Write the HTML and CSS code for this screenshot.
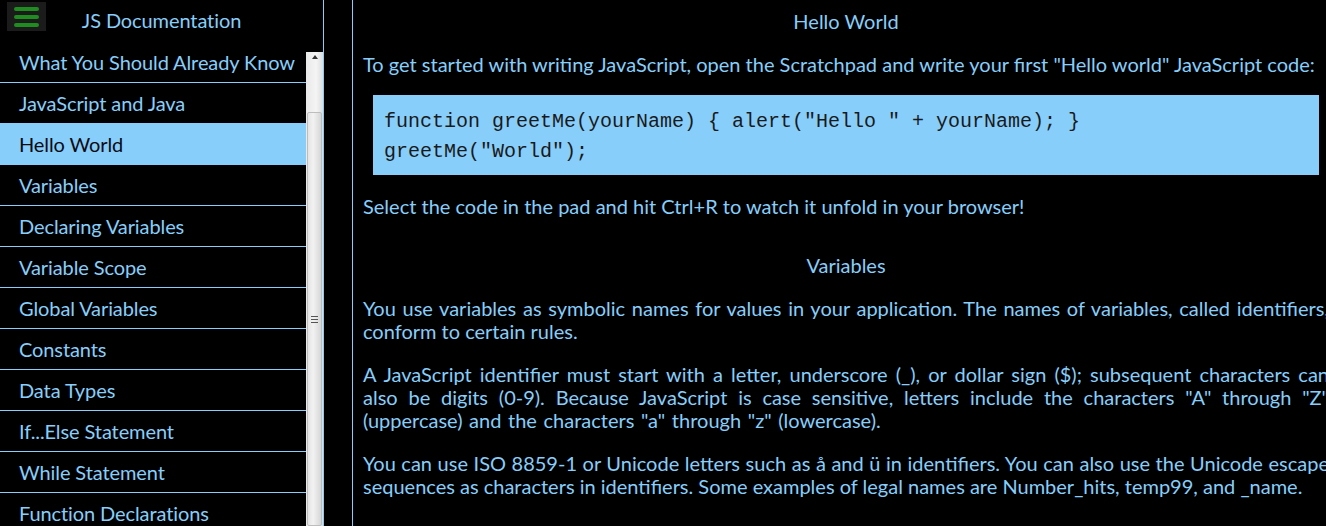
FILE: index.html
```html
<!DOCTYPE html>
<html lang="en">
<head>
<meta charset="utf-8">
<title>JS Documentation</title>
<link rel="stylesheet" href="styles.css">
</head>
<body>
<div class="app">
  <aside class="sidebar">
    <header class="side-head">
      <button class="menu-btn" aria-label="Menu"><span></span><span></span><span></span></button>
      <div class="title">JS Documentation</div>
    </header>
    <div class="nav-wrap">
      <nav class="nav">
        <ul class="nav-list">
          <li class="nav-item">What You Should Already Know</li>
          <li class="nav-item">JavaScript and Java</li>
          <li class="nav-item active">Hello World</li>
          <li class="nav-item">Variables</li>
          <li class="nav-item">Declaring Variables</li>
          <li class="nav-item">Variable Scope</li>
          <li class="nav-item">Global Variables</li>
          <li class="nav-item">Constants</li>
          <li class="nav-item">Data Types</li>
          <li class="nav-item">If...Else Statement</li>
          <li class="nav-item">While Statement</li>
          <li class="nav-item">Function Declarations</li>
          <li class="nav-item">Reference</li>
        </ul>
      </nav>
      <div class="scrollbar">
        <div class="sb-up"><span class="sb-arrow"></span></div>
        <div class="sb-track">
          <div class="sb-thumb"><span class="grip"></span></div>
        </div>
      </div>
    </div>
  </aside>
  <main class="content">
    <section class="section">
      <h2 class="heading">Hello World</h2>
      <p class="para">To get started with writing JavaScript, open the Scratchpad and write your first "Hello world" JavaScript code:</p>
      <pre class="code">function greetMe(yourName) { alert("Hello " + yourName); }
greetMe("World");</pre>
      <p class="para">Select the code in the pad and hit Ctrl+R to watch it unfold in your browser!</p>
    </section>
    <section class="section second">
      <h2 class="heading">Variables</h2>
      <p class="para">You use variables as symbolic names for values in your application. The names of variables, called identifiers, conform to certain rules.</p>
      <p class="para spaced">A JavaScript identifier must start with a letter, underscore (_), or dollar sign ($); subsequent characters can also be digits (0-9). Because JavaScript is case sensitive, letters include the characters "A" through "Z" (uppercase) and the characters "a" through "z" (lowercase).</p>
      <p class="para">You can use ISO 8859-1 or Unicode letters such as å and ü in identifiers. You can also use the Unicode escape sequences as characters in identifiers. Some examples of legal names are Number_hits, temp99, and _name.</p>
    </section>
  </main>
</div>
</body>
</html>
```

FILE: styles.css
```css
* { box-sizing: border-box; }
html, body {
  margin: 0;
  padding: 0;
  background: #000;
  height: 100%;
  overflow: hidden;
}
body {
  font-family: Lato, "Noto Sans", sans-serif;
  color: #87cefa;
}
.app {
  display: flex;
  height: 526px;
  width: 1326px;
  overflow: hidden;
}
.sidebar {
  flex: 0 0 324px;
  width: 324px;
  border-right: 1px solid #87cefa;
  display: flex;
  flex-direction: column;
  height: 100%;
}
.side-head {
  position: relative;
  height: 52px;
  flex: 0 0 52px;
}
.menu-btn {
  position: absolute;
  left: 7px;
  top: 2px;
  width: 39px;
  height: 29px;
  background: #1b1b1b;
  border: 0;
  padding: 5px 7px 0 7px;
  display: flex;
  flex-direction: column;
  gap: 4.5px;
  align-items: stretch;
}
.menu-btn span {
  display: block;
  height: 3.5px;
  background: #1e8c1e;
  border-radius: 2px;
}
.title {
  text-align: center;
  font-size: 20px;
  line-height: 23px;
  padding-top: 9px;
  letter-spacing: -0.1px;
}
.nav-wrap {
  flex: 1 1 auto;
  display: flex;
  overflow: hidden;
}
.nav {
  flex: 0 0 306px;
  overflow: hidden;
}
.nav-list {
  list-style: none;
  margin: -10px 0 0 0;
  padding: 0;
}
.nav-item {
  height: 41px;
  line-height: 40px;
  padding-left: 19px;
  font-size: 20px;
  letter-spacing: -0.1px;
  border-bottom: 1px solid #87cefa;
  white-space: nowrap;
}
.nav-item.active {
  background: #87cefa;
  color: #0b0b14;
}
.scrollbar {
  flex: 0 0 17px;
  background: linear-gradient(to right, #e9e9e9, #f4f4f4 60%, #dcdcdc);
  display: flex;
  flex-direction: column;
}
.sb-up {
  height: 17px;
  display: flex;
  align-items: center;
  justify-content: center;
}
.sb-arrow {
  width: 0;
  height: 0;
  border-left: 3.5px solid transparent;
  border-right: 3.5px solid transparent;
  border-bottom: 4px solid #333;
}
.sb-track {
  flex: 1 1 auto;
  padding: 0 1px;
}
.sb-thumb {
  margin-top: 50px;
  height: 414px;
  border: 1px solid #bdbdbd;
  border-radius: 2px;
  background: linear-gradient(to right, #e4e4e4, #f2f2f2 40%, #d6d6d6);
  display: flex;
  align-items: center;
  justify-content: center;
}
.grip {
  width: 7px;
  height: 7px;
  background: repeating-linear-gradient(to bottom, #555 0, #555 1px, transparent 1px, transparent 3px);
}
.content {
  flex: 0 0 auto;
  width: 987px;
  margin-left: 28px;
  border-left: 1px solid #87cefa;
  padding: 10px 10px 0 10px;
  font-size: 20px;
  line-height: 23px;
  height: 100%;
}
.section { margin: 0; }
.second { margin-top: 36px; }
.heading {
  margin: 0;
  font-size: 20px;
  font-weight: normal;
  line-height: 23px;
  text-align: center;
}
.para {
  margin: 20px 0 0 0;
  text-align: justify;
}
.para.spaced {
  word-spacing: 1.5px;
}
.code {
  margin: 19px 10px 0 10px;
  padding: 12px 11px 8px 11px;
  height: 80px;
  background: #87cefa;
  color: #1a1a1a;
  font-family: "Liberation Mono", "Courier New", monospace;
  font-size: 20px;
  line-height: 30px;
  white-space: pre;
}
```
